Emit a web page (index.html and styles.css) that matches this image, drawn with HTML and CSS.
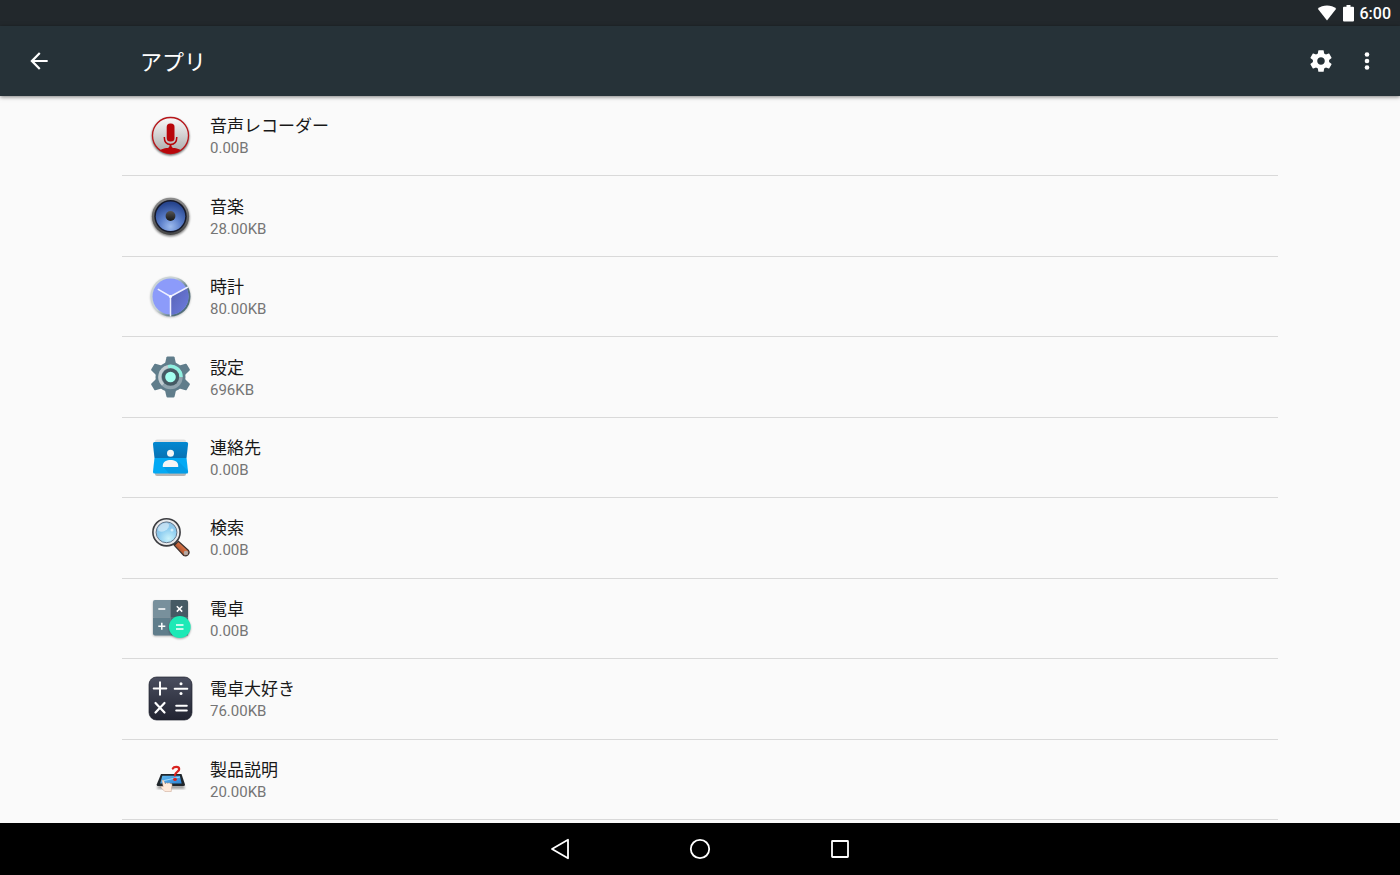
FILE: index.html
```html
<!DOCTYPE html>
<html lang="ja">
<head>
<meta charset="utf-8">
<meta name="viewport" content="width=device-width, initial-scale=1">
<title>アプリ</title>
<link rel="stylesheet" href="styles.css">
</head>
<body>
<div class="status-bar">
  <svg class="status-icon" width="20" height="16" viewBox="0 0 20 16" aria-hidden="true"><path fill="#fff" d="M.8 3.7C3.3 1.600 6.500.5 10 .5s6.700 1.100 9.200 3.200L10 15.500z"/></svg>
  <svg class="status-icon" width="11" height="17" viewBox="0 0 11 17" aria-hidden="true"><path fill="#fff" d="M3.500 0h4v1.700H10q1 0 1 1V15.500q0 1-1 1H1q-1 0-1-1V2.700q0-1 1-1h2.500z"/></svg>
  <span class="clock">6:00</span>
</div>
<header class="toolbar">
  <button class="icon-button" type="button" aria-label="戻る">
    <svg width="26" height="26" viewBox="0 0 24 24"><path fill="#fff" d="M20 11H7.830l5.590-5.590L12 4l-8 8 8 8 1.410-1.410L7.830 13H20v-2z"/></svg>
  </button>
  <h1 class="title">アプリ</h1>
  <button class="icon-button" type="button" aria-label="設定">
    <svg width="26" height="26" viewBox="0 0 24 24"><path fill="#fff" d="M19.430 12.980c.04-.32.070-.64.070-.98s-.03-.66-.07-.98l2.110-1.650c.19-.15.240-.42.120-.64l-2-3.460c-.12-.22-.39-.3-.61-.22l-2.490 1c-.52-.4-1.080-.73-1.690-.98l-.38-2.650C14.460 2.180 14.250 2 14 2h-4c-.25 0-.46.180-.49.420l-.38 2.650c-.61.250-1.170.590-1.690.980l-2.490-1c-.23-.09-.49 0-.61.220l-2 3.460c-.13.220-.07.490.120.640l2.110 1.650c-.04.320-.07.650-.07.980s.03.660.070.980l-2.110 1.650c-.19.150-.24.420-.12.640l2 3.460c.12.220.390.300.610.220l2.490-1c.52.400 1.080.730 1.690.980l.38 2.650c.03.240.240.420.490.420h4c.25 0 .46-.18.490-.42l.38-2.650c.61-.25 1.170-.59 1.690-.98l2.490 1c.23.090.490 0 .61-.22l2-3.460c.12-.22.070-.49-.12-.64l-2.110-1.650zM12 15.500c-1.930 0-3.500-1.570-3.500-3.500s1.570-3.500 3.500-3.500 3.500 1.570 3.500 3.500-1.570 3.500-3.500 3.500z"/></svg>
  </button>
  <button class="icon-button" type="button" aria-label="その他のオプション">
    <svg width="26" height="26" viewBox="0 0 26 26"><g fill="#fff"><circle cx="13" cy="6.500" r="2.300"/><circle cx="13" cy="13" r="2.300"/><circle cx="13" cy="19.500" r="2.300"/></g></svg>
  </button>
</header>
<main class="content">
<ul class="app-list">
  <li class="app-item"><a class="app-link" href="#recorder">
    <svg class="app-icon" viewBox="0 0 45 45" aria-hidden="true">
      <defs>
        <linearGradient id="rec" x1="0" y1="0" x2="0" y2="1"><stop offset="0" stop-color="#fafafa"/><stop offset="1" stop-color="#a9a9a9"/></linearGradient>
        <filter id="soft" x="-20%" y="-20%" width="140%" height="140%"><feGaussianBlur stdDeviation="0.9"/></filter>
        <clipPath id="recClip"><circle cx="22.500" cy="22.500" r="18"/></clipPath>
      </defs>
      <circle cx="22.500" cy="23.700" r="18.800" fill="#000" opacity=".6" filter="url(#soft)"/>
      <circle cx="22.500" cy="22.500" r="18" fill="url(#rec)" stroke="#b8161a" stroke-width="1.300"/>
      <g clip-path="url(#recClip)"><path fill="#b8060a" d="M8 41.500c3-5 8-6.500 12-6.500q1.500-.5 1.700-3h1.600q.2 2.500 1.700 3c4 0 9 1.500 12 6.500z"/></g>
      <rect x="18.700" y="10.500" width="7.800" height="18" rx="3.500" fill="#b8060a"/>
      <path fill="none" stroke="#b8060a" stroke-width="1.500" d="M16.300 24c0 5 2.700 7.500 6.200 7.500s6.300-2.500 6.300-7.500"/>
    </svg>
    <span class="app-text"><span class="app-name">音声レコーダー</span><span class="app-size">0.00B</span></span></a></li>
  <li class="app-item"><a class="app-link" href="#music">
    <svg class="app-icon" viewBox="0 0 45 45" aria-hidden="true">
      <defs>
        <radialGradient id="cone" cx=".5" cy=".85" r=".8"><stop offset="0" stop-color="#9dbbee"/><stop offset=".45" stop-color="#5b7fca"/><stop offset="1" stop-color="#27458e"/></radialGradient>
        <linearGradient id="rim" x1="0" y1="0" x2="0" y2="1"><stop offset="0" stop-color="#8c8c8c"/><stop offset="1" stop-color="#454545"/></linearGradient>
        <linearGradient id="cap" x1="0" y1="0" x2="0" y2="1"><stop offset="0" stop-color="#555"/><stop offset="1" stop-color="#161616"/></linearGradient>
      </defs>
      <circle cx="22.500" cy="23.500" r="19" fill="#000" opacity=".5" filter="url(#soft)"/>
      <circle cx="22.500" cy="22.300" r="18.600" fill="url(#rim)"/>
      <circle cx="22.500" cy="22.300" r="16.200" fill="#15192a"/>
      <circle cx="22.500" cy="22.300" r="14.700" fill="url(#cone)"/>
      <circle cx="22.500" cy="22" r="4.900" fill="url(#cap)"/>
    </svg>
    <span class="app-text"><span class="app-name">音楽</span><span class="app-size">28.00KB</span></span></a></li>
  <li class="app-item"><a class="app-link" href="#clock">
    <svg class="app-icon" viewBox="0 0 45 45" aria-hidden="true">
      <defs>
        <linearGradient id="ring" x1="0" y1=".2" x2="1" y2=".8"><stop offset=".4" stop-color="#c9d3d6"/><stop offset=".75" stop-color="#52707c"/></linearGradient>
        <linearGradient id="shade" x1="0" y1="0" x2="1" y2="1"><stop offset="0" stop-color="#5763b4"/><stop offset="1" stop-color="#6d7ce0"/></linearGradient>
      </defs>
      <circle cx="22.500" cy="23.200" r="20" fill="#000" opacity=".25" filter="url(#soft)"/>
      <circle cx="22.500" cy="22.500" r="20" fill="url(#ring)"/>
      <circle cx="22.500" cy="22.500" r="18" fill="#8c9bfa"/>
      <path fill="url(#shade)" d="M22.500 22.500 38.500 14.200A18 18 0 0 1 22.500 40.500z"/>
      <path fill="none" stroke="#eef0ff" stroke-width="1.500" d="M9.800 15.200 22.500 22.500V42.500M22.500 22.500 40 13"/>
      <circle cx="22.500" cy="22.500" r="1.500" fill="#fff"/>
    </svg>
    <span class="app-text"><span class="app-name">時計</span><span class="app-size">80.00KB</span></span></a></li>
  <li class="app-item"><a class="app-link" href="#settings">
    <svg class="app-icon" viewBox="0 0 45 45" aria-hidden="true">
      <g fill="#607d8b">
        <circle cx="22.500" cy="22" r="15"/>
        <path id="tooth" d="M17 8.500 18.500 2.300q.2-.8 1-.8h6q.8 0 1 .8L28 8.500v27l-1.500 6.200q-.2.800-1 .800h-6q-.8 0-1-.8L17 35.500z"/><use href="#tooth" transform="rotate(60 22.500 22)"/><use href="#tooth" transform="rotate(120 22.500 22)"/>
      </g>
      <circle cx="22.500" cy="22" r="12.200" fill="#90a4ae"/>
      <path fill="none" stroke="#8ff0e0" stroke-width="3.500" d="M20 11.700A10.500 10.500 0 0 1 33 22"/>
      <path fill="none" stroke="#c3ced3" stroke-width="3" d="M20 11.700A10.500 10.500 0 0 0 15 29.500"/>
      <circle cx="22.500" cy="22" r="8.700" fill="#455a64"/>
      <circle cx="22.500" cy="22" r="5.300" fill="#a4fff0"/>
    </svg>
    <span class="app-text"><span class="app-name">設定</span><span class="app-size">696KB</span></span></a></li>
  <li class="app-item"><a class="app-link" href="#contacts">
    <svg class="app-icon" viewBox="0 0 45 45" aria-hidden="true">
      <defs><linearGradient id="conTop" x1="0" y1="0" x2="0" y2="1"><stop offset="0" stop-color="#0288d1"/><stop offset="1" stop-color="#0872b4"/></linearGradient></defs>
      <rect x="7" y="4.500" width="31" height="8" rx="2" fill="#dedede"/>
      <rect x="7" y="34" width="31" height="7" rx="2" fill="#b5b5b5"/>
      <path fill="url(#conTop)" d="M6.500 7h32q1.700 0 1.600 1.700Q40 10 38.500 23h-32Q5 10 5 8.700 5 7 6.500 7z"/>
      <path fill="#03a9f4" d="M6.500 23h32Q40 36 40.100 37q0 1.500-1.600 1.500h-32Q5 38.500 5 37 5 36 6.500 23z"/>
      <path fill="#0277bd" opacity=".25" d="M30.500 26.500 40 36v2.500H21l-6-7z"/>
      <circle cx="22.500" cy="18.300" r="3.500" fill="#f5f5f5"/>
      <path fill="#f5f5f5" d="M14.800 32v-1.500c0-3.800 4-5.500 7.700-5.500s7.700 1.700 7.700 5.500V32z"/>
    </svg>
    <span class="app-text"><span class="app-name">連絡先</span><span class="app-size">0.00B</span></span></a></li>
  <li class="app-item"><a class="app-link" href="#search">
    <svg class="app-icon" viewBox="0 0 45 45" aria-hidden="true">
      <defs>
        <radialGradient id="lens" cx=".6" cy=".8" r=".8"><stop offset="0" stop-color="#c9f2fb"/><stop offset=".6" stop-color="#8cccf0"/><stop offset="1" stop-color="#8ebfe2"/></radialGradient>
        <linearGradient id="handle" x1="1" y1="0" x2="0" y2="1"><stop offset="0" stop-color="#f0a070"/><stop offset=".5" stop-color="#c8643a"/><stop offset="1" stop-color="#6c301c"/></linearGradient>
      </defs>
      <path stroke="#2d2d2d" stroke-width="3.500" d="M25 27l5 5"/>
      <path fill="url(#handle)" stroke="#3a302d" stroke-width="1.200" d="M30.300 26.300 40.500 35.500q1.400 2.300-.5 4.200-2 1.800-4.300.8L26.300 30.300z"/>
      <circle cx="37.900" cy="37.900" r="2.200" fill="#b3aaa6"/>
      <circle cx="18.500" cy="17.300" r="13.600" fill="#e9eaec" stroke="#3c3d41" stroke-width="1.600"/>
      <circle cx="18.500" cy="17.300" r="10.400" fill="url(#lens)" stroke="#63768a" stroke-width="1"/>
      <ellipse cx="15.500" cy="12.300" rx="6" ry="3.600" fill="#fff" opacity=".45" transform="rotate(-30 15.500 12.300)"/>
      <circle cx="24" cy="15" r="1.500" fill="#fff" opacity=".6"/>
    </svg>
    <span class="app-text"><span class="app-name">検索</span><span class="app-size">0.00B</span></span></a></li>
  <li class="app-item"><a class="app-link" href="#calculator">
    <svg class="app-icon" viewBox="0 0 45 45" aria-hidden="true">
      <rect x="5" y="5.200" width="35" height="35" rx="2" fill="#000" opacity=".3" filter="url(#soft)"/>
      <path fill="#78909c" d="M7 4h15.500v17.700H5V6q0-2 2-2z"/>
      <path fill="#455a64" d="M22.500 4H38q2 0 2 2v15.700H22.500z"/>
      <path fill="#607d8b" d="M5 21.700h17.500v17.700H7q-2 0-2-2z"/>
      <path fill="#546e7a" d="M22.500 21.700H40v17.700H22.500z"/>
      <path fill="none" stroke="#fff" stroke-width="1.500" d="M10.300 13h7M28.800 10.200l5.400 5.400m0-5.400-5.400 5.400M10.300 30.200h7m-3.500-3.500v7"/>
      <circle cx="31.800" cy="32" r="10.800" fill="#000" opacity=".35" filter="url(#soft)"/>
      <circle cx="31.800" cy="31" r="10.900" fill="#1de9b6"/>
      <path stroke="#fff" stroke-width="1.500" d="M28 29h7.500M28 33h7.500"/>
    </svg>
    <span class="app-text"><span class="app-name">電卓</span><span class="app-size">0.00B</span></span></a></li>
  <li class="app-item"><a class="app-link" href="#calculator-plus">
    <svg class="app-icon" viewBox="0 0 45 45" aria-hidden="true">
      <defs><linearGradient id="dark" x1="0" y1="0" x2="0" y2="1"><stop offset="0" stop-color="#4a4e5f"/><stop offset="1" stop-color="#222431"/></linearGradient></defs>
      <rect x="1" y="1" width="43" height="43" rx="7.500" fill="url(#dark)" stroke="#20222e" stroke-width=".7"/>
      <g fill="none" stroke="#fff" stroke-width="2" stroke-linecap="round"><path d="M5.700 12.500h12.600M12 6.200v12.600M26.700 12.800h12.600M28.200 29.700h10.600M28.200 34.400h10.600"/><path stroke-width="2.200" d="m7.500 27 9 9.500m0-9.500-9 9.500"/></g>
      <circle cx="33" cy="7.800" r="1.500" fill="#fff"/><circle cx="33" cy="17.500" r="1.500" fill="#fff"/>
    </svg>
    <span class="app-text"><span class="app-name">電卓大好き</span><span class="app-size">76.00KB</span></span></a></li>
  <li class="app-item"><a class="app-link" href="#manual">
    <svg class="app-icon" viewBox="0 0 45 45" aria-hidden="true">
      <defs><linearGradient id="screen" x1="0" y1="0" x2="1" y2="1"><stop offset="0" stop-color="#61b9ef"/><stop offset="1" stop-color="#2d84d6"/></linearGradient></defs>
      <path fill="#000" opacity=".35" filter="url(#soft)" d="M10 28h26l1 4H9z"/>
      <path fill="#20262b" d="M13 17h20.500L37 27.500q0 1.500-1.500 1.500H10q-1.500 0-1.300-1.500z"/>
      <path fill="url(#screen)" d="M14.300 18.800h17.500L33.700 26.500H12.200z"/>
      <path stroke="#b5e4ff" stroke-width=".8" d="m14 24 18-4"/>
      <path fill="none" stroke="#d9231f" stroke-width="2.200" stroke-linecap="round" d="M24.800 11.500c1-2 6.200-2.600 6.400.5.200 2.800-4.500 3-4.300 6.500"/>
      <ellipse cx="27" cy="22.500" rx="2" ry="1.400" fill="#d9231f"/>
      <path fill="#ffeadb" stroke="#b98e76" stroke-width=".4" d="M14 23.500q1.200-1 2 .5l1.300 3 .8-1.300 1.700.5 1.300-.4 1.200.8 1.200-.1.700 1.500-.7 3-.2 3.500h-6.500L13.300 31q-1-2 .7-1.700l1.200.5z"/>
    </svg>
    <span class="app-text"><span class="app-name">製品説明</span><span class="app-size">20.00KB</span></span></a></li>
</ul>
</main>
<nav class="nav-bar" aria-label="システム">
  <button class="nav-button" type="button" aria-label="戻る"><svg width="24" height="24" viewBox="0 0 24 24"><path fill="none" stroke="#fff" stroke-width="1.800" stroke-linejoin="round" d="M20 2.800v18.500L4 12z"/></svg></button>
  <button class="nav-button" type="button" aria-label="ホーム"><svg width="24" height="24" viewBox="0 0 24 24"><circle cx="12" cy="12" r="9.200" fill="none" stroke="#fff" stroke-width="1.800"/></svg></button>
  <button class="nav-button" type="button" aria-label="最近使ったアプリ"><svg width="24" height="24" viewBox="0 0 24 24"><rect x="4" y="4" width="16" height="16" rx=".5" fill="none" stroke="#fff" stroke-width="1.800"/></svg></button>
</nav>
</body>
</html>
```
FILE: styles.css
```css
* {
  box-sizing: border-box;
}

body {
  display: flex;
  flex-direction: column;
  min-height: 100vh;
  margin: 0;
  background: #fafafa;
  color: #181818;
  font-family: Roboto, "Noto Sans CJK JP", sans-serif;
}

button {
  display: flex;
  align-items: center;
  justify-content: center;
  padding: 0;
  border: 0;
  background: none;
  color: inherit;
  cursor: pointer;
}

.status-bar {
  display: flex;
  align-items: center;
  justify-content: flex-end;
  gap: 6px;
  height: 26px;
  padding: 0 9px;
  background: #22282c;
  color: #fff;
}

.clock {
  padding-top: 2px;
  font-size: 16px;
  font-weight: 500;
  line-height: 24px;
}

.toolbar {
  display: flex;
  align-items: center;
  height: 70px;
  padding: 0 10px 0 16px;
  background: #263238;
  color: #fff;
  box-shadow: 0 1px 4px rgba(0, 0, 0, 0.5);
}

.icon-button {
  width: 46px;
  height: 46px;
}

.title {
  flex: 1;
  margin: 0;
  padding: 4px 0 0 78px;
  font-size: 22px;
  font-weight: 400;
  line-height: 32px;
}

.content {
  display: flex;
  flex: 1;
  padding: 0 122px 3px;
}

.app-list {
  display: grid;
  flex: 1;
  grid-auto-rows: 1fr;
  margin: 0;
  padding: 0;
  list-style: none;
}

.app-item {
  display: flex;
  border-bottom: 1px solid #d9d9d9;
}

.app-link {
  display: flex;
  flex: 1;
  align-items: center;
  gap: 17px;
  padding: 0 26px;
  color: inherit;
  text-decoration: none;
}

.app-icon {
  flex: none;
  width: 45px;
  height: 45px;
}

.app-text {
  display: flex;
  flex-direction: column;
  padding-top: 3px;
}

.app-name {
  font-size: 17px;
  line-height: 22px;
}

.app-size {
  color: #757575;
  font-size: 15px;
  line-height: 22px;
}

.nav-bar {
  display: flex;
  justify-content: center;
  height: 52px;
  background: #000;
}

.nav-button {
  width: 140px;
}
```
